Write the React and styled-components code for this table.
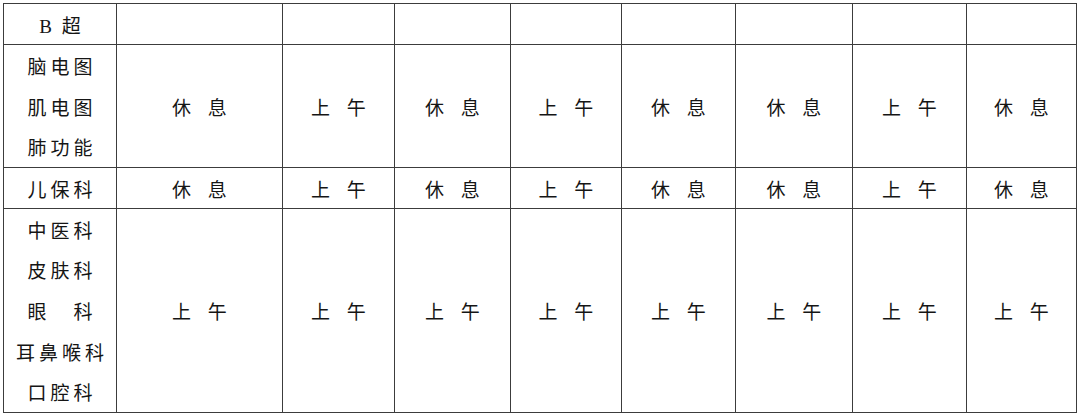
import React from 'react';
import styled, { createGlobalStyle } from 'styled-components';

const GlobalStyle = createGlobalStyle`
    html, body {
        margin: 0;
        padding: 0;
        background: #ffffff;
    }
    body {
        width: 1080px;
        height: 416px;
        overflow: hidden;
    }
`;

const Page = styled.div`
    padding: 3px 0 0 3px;
`;

const Table = styled.table`
    border-collapse: collapse;
    table-layout: fixed;
    width: 1073px;
    font-family: 'Liberation Serif', 'Noto Sans CJK SC', serif;
    font-size: 19px;
    color: #151515;
`;

const Row = styled.tr`
    height: ${(p) => p.h}px;
`;

const Cell = styled.td`
    height: ${(p) => p.h - 1}px;
    border: 1px solid #3c3c3c;
    padding: 0;
    text-align: center;
    vertical-align: middle;
    letter-spacing: ${(p) => (p.tight ? 4 : 3)}px;
    word-spacing: ${(p) => (p.tight ? -3 : 6)}px;
    text-indent: ${(p) => (p.tight ? 4 : 3)}px;
    white-space: nowrap;
    box-sizing: border-box;
`;

const Stack = styled.div`
    height: ${(p) => p.h - 1}px;
    display: flex;
    flex-direction: column;
`;

const Line = styled.div`
    flex: 1;
    display: flex;
    align-items: center;
    justify-content: center;
`;

const widths = [113, 166, 112, 116, 111, 114, 117, 114, 110];

const REST = '休 息';
const AM = '上 午';

const rows = [
    { h: 41, dept: ['B 超'], slots: ['', '', '', '', '', '', '', ''] },
    {
        h: 123,
        dept: ['脑电图', '肌电图', '肺功能'],
        slots: [REST, AM, REST, AM, REST, REST, AM, REST],
    },
    { h: 41, dept: ['儿保科'], slots: [REST, AM, REST, AM, REST, REST, AM, REST] },
    {
        h: 204,
        dept: ['中医科', '皮肤科', '眼　科', '耳鼻喉科', '口腔科'],
        slots: [AM, AM, AM, AM, AM, AM, AM, AM],
    },
];

const App = () => {
    return (
        <Page>
            <GlobalStyle />
            <Table>
                <colgroup>
                    {widths.map((w, i) => (
                        <col key={i} style={{ width: w }} />
                    ))}
                </colgroup>
                <tbody>
                    {rows.map((row, i) => (
                        <Row key={i} h={row.h}>
                            <Cell h={row.h} tight>
                                <Stack h={row.h}>
                                    {row.dept.map((d) => (
                                        <Line key={d}>{d}</Line>
                                    ))}
                                </Stack>
                            </Cell>
                            {row.slots.map((s, j) => (
                                <Cell key={j} h={row.h}>
                                    {s}
                                </Cell>
                            ))}
                        </Row>
                    ))}
                </tbody>
            </Table>
        </Page>
    );
};

export default App;
